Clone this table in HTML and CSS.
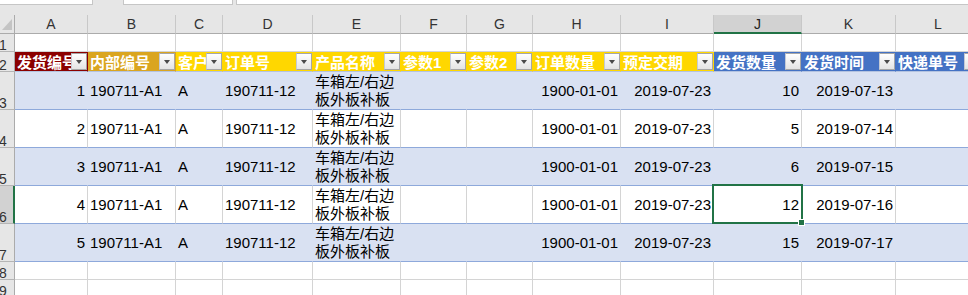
FILE: index.html
```html
<!DOCTYPE html>
<html lang="zh">
<head>
<meta charset="utf-8">
<title>发货表</title>
<link rel="stylesheet" href="styles.css">
</head>
<body>
<div class="app">
  <div class="topbar">
    <div class="tb tb1"></div>
    <div class="tb tb2"></div>
    <div class="tb tb3"></div>
  </div>

  <div class="row colhdr">
    <div class="c corner"><span class="tri"></span></div>
    <div class="c ch">A</div><div class="c ch">B</div><div class="c ch">C</div><div class="c ch">D</div>
    <div class="c ch">E</div><div class="c ch">F</div><div class="c ch">G</div><div class="c ch">H</div>
    <div class="c ch">I</div><div class="c ch ch-sel">J</div><div class="c ch">K</div><div class="c ch">L</div>
  </div>

  <div class="row r-s">
    <div class="c rh"><span>1</span></div>
    <div class="c"></div><div class="c"></div><div class="c"></div><div class="c"></div>
    <div class="c"></div><div class="c"></div><div class="c"></div><div class="c"></div>
    <div class="c"></div><div class="c"></div><div class="c"></div><div class="c"></div>
  </div>

  <div class="row r-h">
    <div class="c rh"><span>2</span></div>
    <div class="c th th-red"><span class="tt">发货编号</span><i class="fb"></i></div>
    <div class="c th th-gold2"><span class="tt">内部编号</span><i class="fb"></i></div>
    <div class="c th th-gold"><span class="tt">客户</span><i class="fb"></i></div>
    <div class="c th th-gold"><span class="tt">订单号</span><i class="fb"></i></div>
    <div class="c th th-gold"><span class="tt">产品名称</span><i class="fb"></i></div>
    <div class="c th th-gold"><span class="tt">参数1</span><i class="fb"></i></div>
    <div class="c th th-gold"><span class="tt">参数2</span><i class="fb"></i></div>
    <div class="c th th-gold"><span class="tt">订单数量</span><i class="fb"></i></div>
    <div class="c th th-gold"><span class="tt">预定交期</span><i class="fb"></i></div>
    <div class="c th th-blue"><span class="tt">发货数量</span><i class="fb"></i></div>
    <div class="c th th-blue"><span class="tt">发货时间</span><i class="fb"></i></div>
    <div class="c th th-blue"><span class="tt">快递单号</span><i class="fb"></i></div>
  </div>

  <div class="row r-d band">
    <div class="c rh"><span>3</span></div>
    <div class="c num">1</div><div class="c">190711-A1</div><div class="c">A</div><div class="c">190711-12</div>
    <div class="c wrap">车箱左/右边<br>板外板补板</div><div class="c"></div><div class="c"></div>
    <div class="c num">1900-01-01</div><div class="c num">2019-07-23</div><div class="c num">10</div>
    <div class="c num">2019-07-13</div><div class="c"></div>
  </div>

  <div class="row r-d plain">
    <div class="c rh"><span>4</span></div>
    <div class="c num">2</div><div class="c">190711-A1</div><div class="c">A</div><div class="c">190711-12</div>
    <div class="c wrap">车箱左/右边<br>板外板补板</div><div class="c"></div><div class="c"></div>
    <div class="c num">1900-01-01</div><div class="c num">2019-07-23</div><div class="c num">5</div>
    <div class="c num">2019-07-14</div><div class="c"></div>
  </div>

  <div class="row r-d band">
    <div class="c rh"><span>5</span></div>
    <div class="c num">3</div><div class="c">190711-A1</div><div class="c">A</div><div class="c">190711-12</div>
    <div class="c wrap">车箱左/右边<br>板外板补板</div><div class="c"></div><div class="c"></div>
    <div class="c num">1900-01-01</div><div class="c num">2019-07-23</div><div class="c num">6</div>
    <div class="c num">2019-07-15</div><div class="c"></div>
  </div>

  <div class="row r-d plain">
    <div class="c rh rh-sel"><span>6</span></div>
    <div class="c num">4</div><div class="c">190711-A1</div><div class="c">A</div><div class="c">190711-12</div>
    <div class="c wrap">车箱左/右边<br>板外板补板</div><div class="c"></div><div class="c"></div>
    <div class="c num">1900-01-01</div><div class="c num">2019-07-23</div>
    <div class="c num active">12<span class="sel"><span class="handle"></span></span></div>
    <div class="c num">2019-07-16</div><div class="c"></div>
  </div>

  <div class="row r-d band">
    <div class="c rh"><span>7</span></div>
    <div class="c num">5</div><div class="c">190711-A1</div><div class="c">A</div><div class="c">190711-12</div>
    <div class="c wrap">车箱左/右边<br>板外板补板</div><div class="c"></div><div class="c"></div>
    <div class="c num">1900-01-01</div><div class="c num">2019-07-23</div><div class="c num">15</div>
    <div class="c num">2019-07-17</div><div class="c"></div>
  </div>

  <div class="row r-s">
    <div class="c rh"><span>8</span></div>
    <div class="c"></div><div class="c"></div><div class="c"></div><div class="c"></div>
    <div class="c"></div><div class="c"></div><div class="c"></div><div class="c"></div>
    <div class="c"></div><div class="c"></div><div class="c"></div><div class="c"></div>
  </div>

  <div class="row r-s">
    <div class="c rh"><span>9</span></div>
    <div class="c"></div><div class="c"></div><div class="c"></div><div class="c"></div>
    <div class="c"></div><div class="c"></div><div class="c"></div><div class="c"></div>
    <div class="c"></div><div class="c"></div><div class="c"></div><div class="c"></div>
  </div>
</div>
</body>
</html>
```

FILE: styles.css
```css
html, body {
  margin: 0;
  padding: 0;
  background: #ffffff;
  overflow: hidden;
}

.app {
  width: 981px;
  font-family: "Liberation Sans", "Noto Sans CJK SC", sans-serif;
  font-size: 15px;
  color: #000;
}

/* top strip (formula bar remnants) */
.topbar {
  height: 15px;
  background: #e6e6e6;
  display: flex;
  align-items: flex-start;
}
.tb {
  height: 5px;
  box-sizing: border-box;
  background: #fff;
  border-bottom: 1px solid #c6c6c6;
}
.tb1 { width: 93px; border-right: 1px solid #c6c6c6; }
.tb2 { width: 110px; margin-left: 30px; border-left: 1px solid #c6c6c6; border-right: 1px solid #c6c6c6; }
.tb3 { flex: 1; margin-left: 3px; border-left: 1px solid #c6c6c6; }

/* grid rows */
.row {
  display: grid;
  grid-template-columns: 15px 73px 88px 47px 90px 88px 66px 66px 88px 93px 88px 94px 85px;
}
.c {
  box-sizing: border-box;
  border-right: 1px solid #d4d4d4;
  border-bottom: 1px solid #d4d4d4;
  overflow: hidden;
  white-space: nowrap;
  display: flex;
  align-items: center;
  padding: 0 2px;
  background: #fff;
}

/* column header */
.colhdr { height: 19px; }
.colhdr .c {
  background: #e6e6e6;
  border-right-color: #c8c8c8;
  border-bottom-color: #ababab;
  justify-content: center;
  font-size: 14px;
  color: #333;
  padding: 0;
}
.colhdr .corner {
  border-right-color: #ababab;
  position: relative;
}
.tri {
  position: absolute;
  right: 2px;
  bottom: 3px;
  width: 0;
  height: 0;
  border-left: 10px solid transparent;
  border-bottom: 11px solid #c4c4c4;
}
.colhdr .ch-sel {
  background: #d2d2d2;
  border-bottom: 2px solid #217346;
  color: #222;
}

/* row header */
.rh {
  background: #e6e6e6;
  border-right-color: #ababab;
  border-bottom-color: #b5b5b5;
  align-items: flex-end;
  padding: 0;
  font-size: 14px;
  line-height: 12px;
  color: #333;
}
.rh span { margin-left: -1px; }
.rh-sel {
  background: #d2d2d2;
  border-right: 2px solid #217346;
}

.r-s { height: 18px; }
.r-h { height: 20px; }
.r-d { height: 38px; }

/* table header row */
.th {
  position: relative;
  color: #fff;
  font-weight: bold;
  padding-left: 2px;
  border-bottom-color: #b4c3e0;
}
.th-red   { background: #8b0000; border-right-color: #8b0000; }
.th-gold2 { background: #daa520; border-right-color: #daa520; }
.th-gold  { background: #ffd700; border-right-color: #ffd700; }
.th-blue  { background: #4472c4; border-right-color: #4472c4; }
.tt { display: block; }

.fb {
  position: absolute;
  right: 0;
  top: 1px;
  width: 16px;
  height: 17px;
  box-sizing: border-box;
  border: 1px solid #a6a6a6;
  border-left-color: #c4cad6;
  background: linear-gradient(#ffffff, #e4e4e4);
}
.fb::after {
  content: "";
  position: absolute;
  left: 4px;
  top: 6px;
  width: 0;
  height: 0;
  border-left: 3.5px solid transparent;
  border-right: 3.5px solid transparent;
  border-top: 4px solid #4a4a4a;
}

/* data rows */
.r-d .c:not(.rh) { border-bottom-color: #8ea9db; }
.band .c:not(.rh) {
  background: #d9e1f2;
  border-right-color: #d9e1f2;
}
.num { justify-content: flex-end; }
.wrap { line-height: 18px; padding-top: 1px; }

.active {
  position: relative;
  overflow: visible;
}
.sel {
  position: absolute;
  left: -2px;
  top: -2px;
  right: -2px;
  bottom: -1px;
  border: 2px solid #217346;
  z-index: 2;
}
.handle {
  position: absolute;
  right: -4px;
  bottom: -4px;
  width: 5px;
  height: 5px;
  background: #217346;
  border: 1px solid #fff;
}
```
